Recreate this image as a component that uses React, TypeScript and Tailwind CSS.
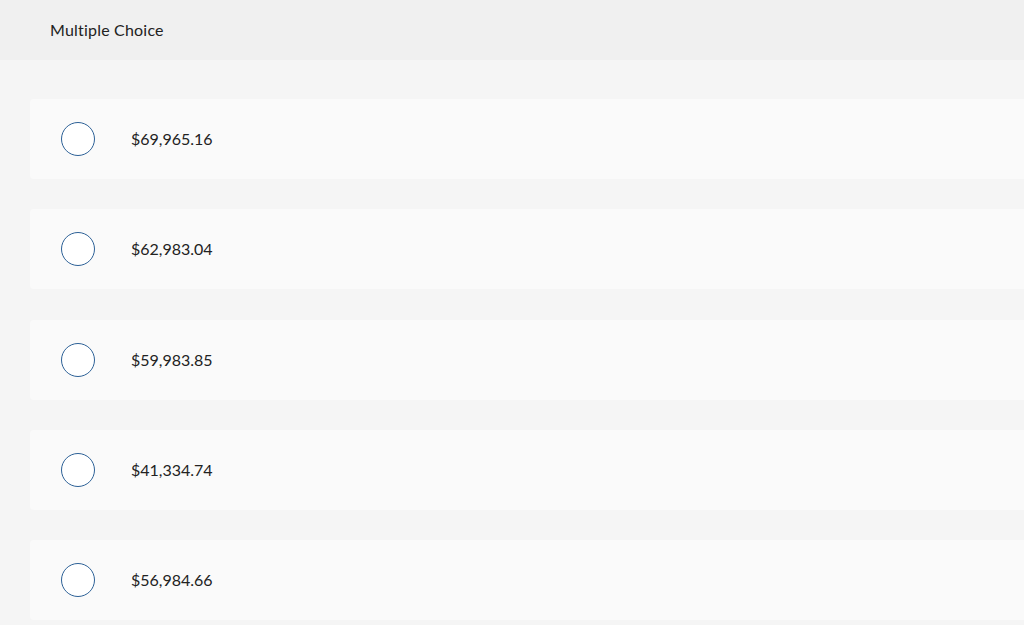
import React from 'react';

const choices = ['$69,965.16', '$62,983.04', '$59,983.85', '$41,334.74', '$56,984.66'];

export default function App() {
  return (
    <div className="min-h-[625px] w-full overflow-hidden bg-[#f5f5f5] font-['Lato','Open_Sans',sans-serif] text-[#222]">
      {/* header */}
      <div className="flex h-[60px] items-center bg-[#f0f0f0] pl-[50px] text-[16px] tracking-[0.2px]">
        Multiple Choice
      </div>

      {/* options */}
      <div className="flex flex-col gap-[30.25px] pl-[30px] pt-[39px]">
        {choices.map((c) => (
          <div
            key={c}
            className="-mr-[20px] flex h-[80px] items-center rounded-[4px] bg-[#fafafa] pl-[31px]"
          >
            <span className="h-[34px] w-[34px] shrink-0 rounded-full border-[1.5px] border-[#2d6197] bg-white" />
            <span className="ml-[36px] text-[16px]">{c}</span>
          </div>
        ))}
      </div>
    </div>
  );
}
